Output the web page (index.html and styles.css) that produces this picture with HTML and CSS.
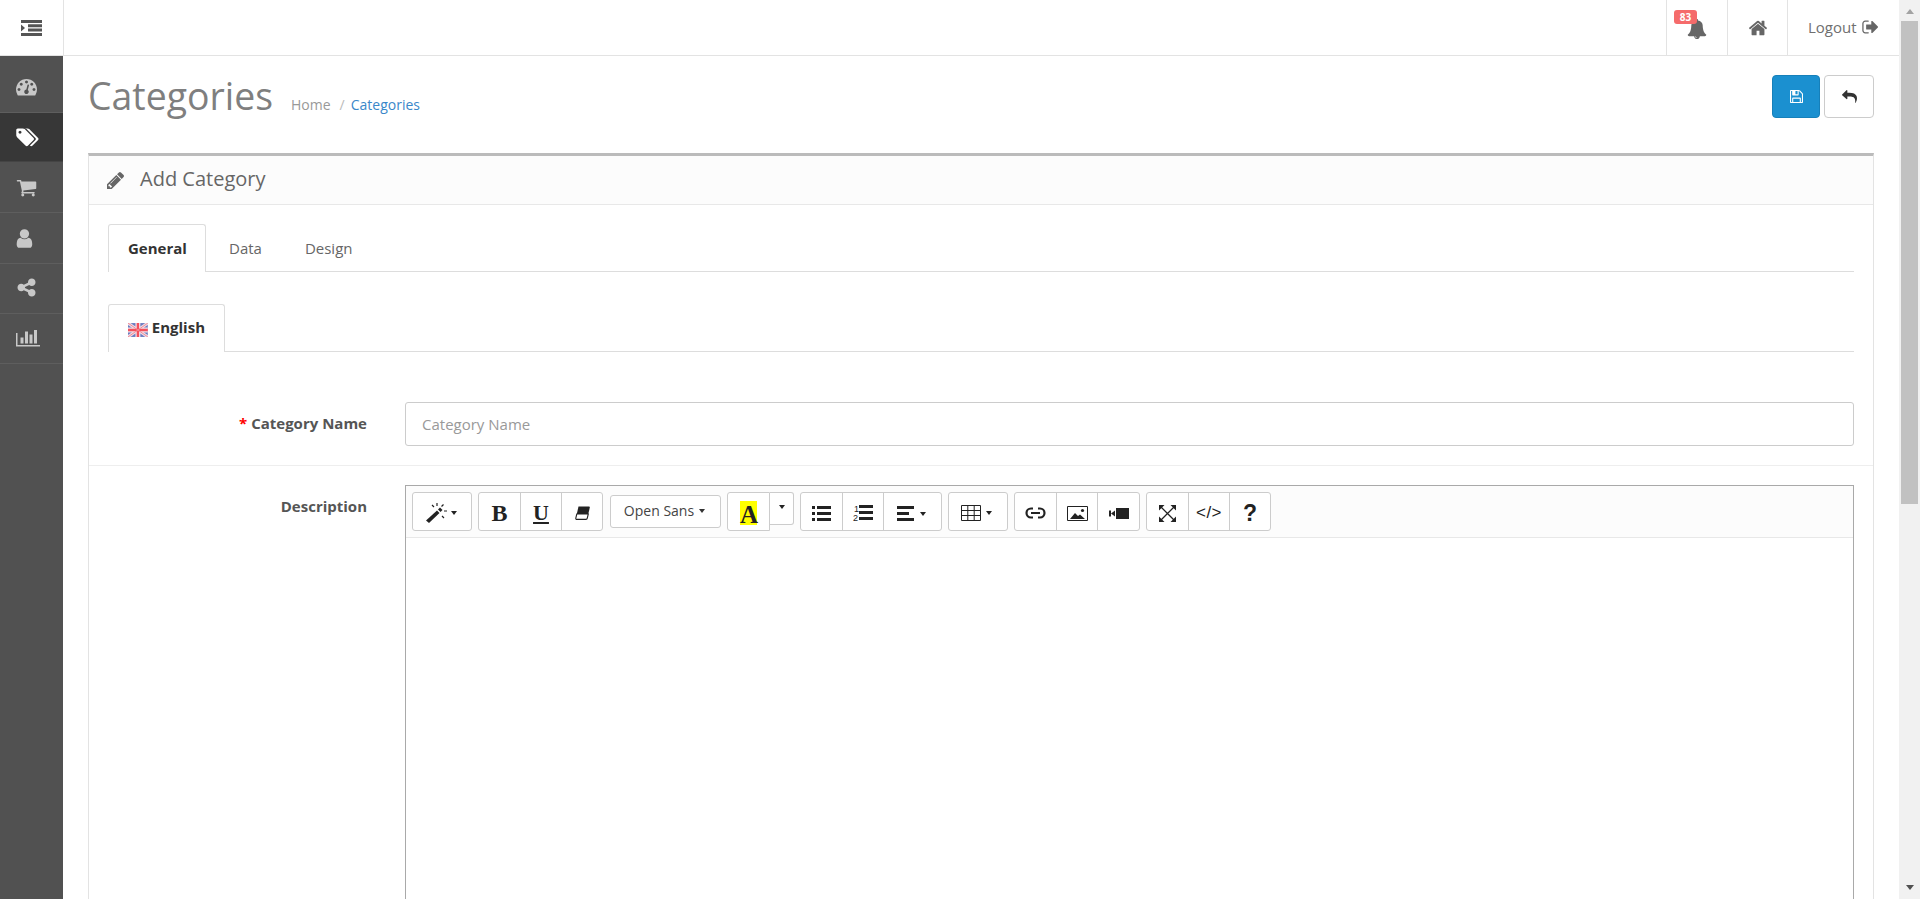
FILE: index.html
```html
<!DOCTYPE html>
<html lang="en">
<head>
<meta charset="utf-8">
<title>Categories</title>
<link rel="stylesheet" href="styles.css">
</head>
<body>
<div class="app">
  <header class="topbar">
    <button class="toggle" aria-label="Menu">
      <svg class="ic-toggle" viewBox="0 0 21 16"><path d="M0 0h21v3H0zM7 4.300h14v3H7zM7 8.600h14v3H7zM0 13h21v3H0zM0 4.500l4 3.500-4 3.500z"/></svg>
    </button>
    <nav class="topnav">
      <a class="cell cell-bell"><span class="badge">83</span><svg class="ic-bell" viewBox="0 0 1792 1792"><path d="M912 1696q0-16-16-16-59 0-101.500-42.500t-42.500-101.500q0-16-16-16t-16 16q0 73 51.500 124.500t124.500 51.500q16 0 16-16zm816-288q0 52-38 90t-90 38h-448q0 106-75 181t-181 75-181-75-75-181h-448q-52 0-90-38t-38-90q50-42 91-88t85-119.500 74.500-158.500 50-206 19.500-260q0-152 117-282.500t307-158.500q-8-19-8-39 0-40 28-68t68-28 68 28 28 68q0 20-8 39 190 28 307 158.500t117 282.500q0 139 19.500 260t50 206 74.500 158.500 85 119.500 91 88z"/></svg></a>
      <a class="cell cell-home"><svg class="ic-home" viewBox="0 0 1792 1792"><path d="M1472 992v480q0 26-19 45t-45 19h-384v-384h-256v384h-384q-26 0-45-19t-19-45v-480q0-1 .5-3t.5-3l575-474 575 474q1 2 1 6zm223-69l-62 74q-8 9-21 11h-3q-13 0-21-7l-692-577-692 577q-12 8-24 7-13-2-21-11l-62-74q-8-10-7-23.500t11-21.500l719-599q32-26 76-26t76 26l244 204v-195q0-14 9-23t23-9h192q14 0 23 9t9 23v408l219 182q10 8 11 21.500t-7 23.500z"/></svg></a>
      <a class="cell cell-logout">Logout <svg class="ic-out" viewBox="0 0 1664 1792"><path d="M704 1440q0 4 1 20t.5 26.500-3 23.500-10 19.500-20.500 6.500h-320q-119 0-203.500-84.500t-84.500-203.500v-704q0-119 84.500-203.500t203.500-84.500h320q13 0 22.500 9.500t9.500 22.500q0 4 1 20t.5 26.500-3 23.500-10 19.500-20.500 6.500h-320q-66 0-113 47t-47 113v704q0 66 47 113t113 47h312l11.500 1 11.500 3 8 5.500 7 9 2 13.500zm928-544q0 26-19 45l-544 544q-19 19-45 19t-45-19-19-45v-288h-448q-26 0-45-19t-19-45v-384q0-26 19-45t45-19h448v-288q0-26 19-45t45-19 45 19l544 544q19 19 19 45z"/></svg></a>
    </nav>
  </header>
  <div class="layout">
    <aside class="sidebar">
      <a class="side-item first"><svg class="ic-side" viewBox="0 0 1792 1792"><path d="M384 1152q0-53-37.500-90.500t-90.500-37.500-90.500 37.500-37.500 90.500 37.500 90.500 90.500 37.500 90.500-37.500 37.500-90.500zm192-448q0-53-37.500-90.500t-90.500-37.500-90.500 37.500-37.500 90.500 37.500 90.500 90.500 37.500 90.500-37.500 37.500-90.500zm428 481l101-382q6-26-7.500-48.500t-38.500-29.500-48 6.500-30 39.500l-101 382q-60 5-107 43.500t-63 98.500q-20 77 20 146t117 89 146-20 89-117q16-60-6-117t-72-91zm660-33q0-53-37.500-90.500t-90.500-37.500-90.500 37.500-37.500 90.500 37.500 90.500 90.500 37.500 90.500-37.500 37.500-90.500zm-640-640q0-53-37.500-90.500t-90.500-37.500-90.500 37.500-37.500 90.500 37.500 90.500 90.500 37.500 90.500-37.500 37.500-90.500zm448 192q0-53-37.500-90.500t-90.500-37.500-90.500 37.500-37.500 90.500 37.500 90.500 90.500 37.500 90.500-37.500 37.500-90.500zm320 448q0 261-141 483-19 29-54 29h-1402q-35 0-54-29-141-221-141-483 0-182 71-348t191-286 286-191 348-71 348 71 286 191 191 286 71 348z"/></svg></a>
      <a class="side-item active"><svg class="ic-side ic-tags" viewBox="0 0 1920 1792"><path d="M448 448q0-53-37.500-90.500t-90.500-37.500-90.500 37.500-37.500 90.500 37.500 90.500 90.500 37.500 90.500-37.500 37.500-90.500zm1067 576q0 53-37 90l-491 492q-39 37-91 37-53 0-90-37l-715-716q-38-37-64.500-101t-26.500-117v-416q0-52 38-90t90-38h416q53 0 117 26.500t102 64.500l715 714q37 39 37 91zm384 0q0 53-37 90l-491 492q-39 37-91 37-36 0-59-14t-53-45l470-470q37-37 37-90 0-52-37-91l-715-714q-38-38-102-64.500t-117-26.500h224q53 0 117 26.500t102 64.500l715 714q37 39 37 91z"/></svg></a>
      <a class="side-item tall"><svg class="ic-side" viewBox="0 0 1792 1792"><path d="M704 1536q0 52-38 90t-90 38-90-38-38-90 38-90 90-38 90 38 38 90zm896 0q0 52-38 90t-90 38-90-38-38-90 38-90 90-38 90 38 38 90zm128-1088v512q0 24-16.500 42.500t-40.500 21.500l-1044 122q13 60 13 70 0 16-24 64h920q26 0 45 19t19 45-19 45-45 19h-1024q-26 0-45-19t-19-45q0-11 8-31.500t16-36 21.500-40 15.500-29.500l-177-823h-204q-26 0-45-19t-19-45 19-45 45-19h256q16 0 28.500 6.500t19.500 15.500 13 24.500 8 26 5.500 29.500 4.500 26h1201q26 0 45 19t19 45z"/></svg></a>
      <a class="side-item tall"><svg class="ic-side ic-user" viewBox="200 128 1400 1536"><path d="M1536 1399q0 109-62.500 187t-150.500 78h-854q-88 0-150.500-78t-62.500-187q0-85 8.500-160.500t31.500-152 58.500-131 94-89 134.500-34.500q131 128 313 128t313-128q76 0 134.500 34.500t94 89 58.500 131 31.500 152 8.500 160.500zm-256-887q0 159-112.500 271.500t-271.500 112.500-271.500-112.500-112.500-271.500 112.500-271.500 271.500-112.500 271.500 112.500 112.500 271.500z"/></svg></a>
      <a class="side-item"><svg class="ic-side" viewBox="0 0 1792 1792"><path d="M1344 1024q133 0 226.500 93.500t93.500 226.500-93.500 226.500-226.500 93.500-226.500-93.500-93.500-226.500q0-12 2-34l-360-180q-92 86-218 86-133 0-226.500-93.500t-93.500-226.500 93.500-226.500 226.500-93.500q126 0 218 86l360-180q-2-22-2-34 0-133 93.500-226.500t226.500-93.500 226.500 93.500 93.500 226.500-93.500 226.500-226.500 93.500q-126 0-218-86l-360 180q2 22 2 34t-2 34l360 180q92-86 218-86z"/></svg></a>
      <a class="side-item"><svg class="ic-side ic-chart" viewBox="0 0 2048 1792"><path d="M640 896v512h-256v-512h256zm384-512v1024h-256v-1024h256zm1024 1152v128h-2048v-1152h128v1024h1920zm-640-896v768h-256v-768h256zm384-384v1152h-256v-1152h256z"/></svg></a>
    </aside>
    <main class="content">
      <div class="page-header">
        <div class="title-wrap">
          <h1>Categories</h1>
          <ul class="breadcrumb"><li>Home</li><li class="sep">/</li><li class="current">Categories</li></ul>
        </div>
        <div class="actions">
          <button class="btn btn-primary" aria-label="Save"><svg class="ic-btn" viewBox="0 0 1536 1536"><path d="M384 1408h768v-384H384v384zm896 0h128V512q0-14-10-38.500t-20-34.500l-281-281q-10-10-34-20t-39-10v416q0 40-28 68t-68 28H352q-40 0-68-28t-28-68V128H128v1280h128V992q0-40 28-68t68-28h832q40 0 68 28t28 68v416zM896 480V160q0-13-9.500-22.500T864 128H672q-13 0-22.500 9.500T640 160v320q0 13 9.500 22.500T672 512h192q13 0 22.500-9.500T896 480zm640 32v928q0 40-28 68t-68 28H96q-40 0-68-28t-28-68V96q0-40 28-68T96 0h928q40 0 88 20t76 48l280 280q28 28 48 76t20 88z"/></svg></button>
          <button class="btn btn-default" aria-label="Cancel"><svg class="ic-reply" viewBox="0 0 1792 1536"><path d="M1792 992q0 166-127 451-3 7-10.500 24t-13.500 30-13 22q-12 17-28 17-15 0-23.500-10t-8.500-25q0-9 2.500-26.500t2.500-23.500q5-68 5-123 0-101-17.500-181t-48.500-138.500-80-101-105.500-69.500-133-42.500-154-21.500-175.500-6H640v256q0 26-19 45t-45 19-45-19L19 621Q0 602 0 576t19-45L531 19q19-19 45-19t45 19 19 45v256h224q713 0 875 403 53 134 53 333z"/></svg></button>
        </div>
      </div>
      <section class="panel">
        <div class="panel-heading">
          <svg class="ic-pencil" viewBox="0 0 1515 1515"><path d="M363 1387l91-91-235-235-91 91v107h128v128h107zM886 459q0-22-22-22-10 0-17 7L305 986q-7 7-7 17 0 22 22 22 10 0 17-7l542-542q7-7 7-17zM832 267l416 416-832 832H0v-416zM1515 363q0 53-37 90l-166 166-416-416 166-165q36-38 90-38 53 0 91 38l235 234q37 39 37 91z"/></svg>
          <h3>Add Category</h3>
        </div>
        <div class="panel-body">
          <ul class="tabs tabs-main">
            <li class="tab active">General</li>
            <li class="tab tab-data">Data</li>
            <li class="tab">Design</li>
          </ul>
          <ul class="tabs tabs-lang">
            <li class="tab active">
              <svg class="flag" viewBox="0 0 20 14"><rect width="20" height="14" fill="#6a7cc0"/><path d="M0 0l20 14M20 0L0 14" stroke="#f0dbe4" stroke-width="3"/><path d="M10 0v14M0 7h20" stroke="#f3dfe6" stroke-width="5"/><path d="M10 0v14M0 7h20" stroke="#f4505c" stroke-width="2.400"/><path d="M0 0l20 14M20 0L0 14" stroke="#f08a96" stroke-width="1"/></svg>
              English
            </li>
          </ul>
          <div class="form-row row-name">
            <label class="form-label"><span class="req">*</span> Category Name</label>
            <div class="form-field"><input class="input" type="text" placeholder="Category Name"></div>
          </div>
          <div class="form-row row-desc">
            <label class="form-label">Description</label>
            <div class="form-field">
              <div class="editor">
                <div class="toolbar">
                  <div class="group"><button class="tb w60 has-caret"><svg class="i" width="32" height="22" viewBox="0 0 32 22"><path d="M1 18.500L12 8.500l2.500 2.500L4 21z"/><path d="M13 7.500l2-2 2.500 2.500-2 2z"/><path d="M12 1v3M7 3l2 2M18.500 2.500l-2 2M19 9h3M17 14l2 2" stroke="#222" stroke-width="1.200" fill="none"/><path d="M26 9h6l-3 4z"/></svg></button></div>
                  <div class="group">
                    <button class="tb tb-b">B</button>
                    <button class="tb tb-u">U</button>
                    <button class="tb"><svg class="i" width="15" height="14" viewBox="0 0 15 14"><path d="M3.500.500h10.500q1 0 .800 1L13.300 8H1.800z"/><path d="M1.800 8h11.500l-1 4.200q-.2 1.200-1.300 1.200H2q-1.500 0-1.200-1.300z" fill="#fff" stroke="#222" stroke-width="1.100"/></svg></button>
                  </div>
                  <button class="tb-font">Open Sans <span class="caret"></span></button>
                  <div class="group group-color">
                    <button class="tb tb-a"><span class="hl">A</span></button>
                    <button class="tb tb-drop"><span class="caret dark"></span></button>
                  </div>
                  <div class="group">
                    <button class="tb"><svg class="i" width="19" height="15" viewBox="0 0 19 15"><path d="M0 0h3v3H0zM5 0h14v3H5zM0 6h3v3H0zM5 6h14v3H5zM0 12h3v3H0zM5 12h14v3H5z"/></svg></button>
                    <button class="tb"><svg class="i" width="20" height="16" viewBox="0 0 20 16"><path d="M6 0h14v3H6zM6 6h14v3H6zM6 12h14v3H6z"/><text class="num" x="1" y="6.500">1</text><text class="num" x="0" y="15.500">2</text></svg></button>
                    <button class="tb w58 has-caret"><svg class="i" width="29" height="15" viewBox="0 0 29 15"><path d="M0 0h17v3H0zM0 6h12v3H0zM0 12h17v3H0zM23 6h6l-3 4z"/></svg></button>
                  </div>
                  <div class="group"><button class="tb w59 has-caret"><svg class="i" width="31" height="17" viewBox="0 0 31 17"><path d="M.5.500h19v15H.500zM.5 5.500h19M.5 10.500h19M6.800.500v15M13.200.500v15" fill="none" stroke="#222" stroke-width="1"/><path d="M25 6h6l-3 4z"/></svg></button></div>
                  <div class="group">
                    <button class="tb"><svg class="i" width="21" height="12" viewBox="0 0 21 12"><path d="M8 1.500H6a4.500 4.500 0 0 0 0 9h2M13 1.500h2a4.500 4.500 0 0 1 0 9h-2M6 6h9" fill="none" stroke="#222" stroke-width="2.200"/></svg></button>
                    <button class="tb"><svg class="i" width="21" height="15" viewBox="0 0 21 15"><path d="M.5.500h20v14H.500z" fill="none" stroke="#222"/><path d="M3 13l5-6 3 3 2-1.500 5 4.500z"/><circle cx="15.500" cy="4.500" r="1.600"/></svg></button>
                    <button class="tb w42"><svg class="i" width="20" height="11" viewBox="0 0 20 11"><path d="M7 0h13v11H7zM0 2.500h2v6H0zM2 5.500l4-3v6z"/></svg></button>
                  </div>
                  <div class="group">
                    <button class="tb"><svg class="i" width="17" height="17" viewBox="0 0 17 17"><path d="M2 2l13 13M15 2L2 15" fill="none" stroke="#222" stroke-width="1.300"/><path d="M0 0h5.500L0 5.500zM17 0v5.500L11.500 0zM0 17v-5.500L5.500 17zM17 17h-5.500l5.500-5.500z"/></svg></button>
                    <button class="tb tb-code">&lt;/&gt;</button>
                    <button class="tb tb-help">?</button>
                  </div>
                </div>
                <div class="editable"></div>
              </div>
            </div>
          </div>
        </div>
      </section>
    </main>
  </div>
</div>
<div class="scrollbar">
  <span class="arrow up"></span>
  <div class="thumb-track"><div class="thumb"></div></div>
  <span class="arrow down"></span>
</div>
</body>
</html>
```
FILE: styles.css
```css
* { box-sizing: border-box; }
html, body { margin: 0; height: 899px; overflow: hidden; }
body {
  display: flex;
  font-family: "Open Sans", sans-serif;
  font-size: 15px;
  color: #666;
  background: #fff;
}
button { font-family: inherit; cursor: pointer; }
ul { list-style: none; margin: 0; padding: 0; }

.app { flex: 1; min-width: 0; display: flex; flex-direction: column; height: 899px; }

/* top bar */
.topbar { height: 56px; flex: none; display: flex; justify-content: space-between; border-bottom: 1px solid #e3e3e3; }
.toggle { width: 64px; padding: 0; background: #fff; border: 0; border-right: 1px solid #e3e3e3; display: flex; align-items: center; justify-content: center; }
.ic-toggle { width: 21px; height: 16px; fill: #555; }
.topnav { display: flex; }
.cell { display: flex; align-items: center; justify-content: center; border-left: 1px solid #e3e3e3; position: relative; color: #6f6f6f; }
.cell-bell { width: 61px; }
.cell-home { width: 60px; }
.cell-logout { width: 112px; font-size: 15px; justify-content: flex-start; padding-left: 20px; gap: 4px; padding-bottom: 1px; }
.ic-bell { width: 20px; height: 20px; fill: #666; margin: 2px 0 0 -1px; }
.ic-home { width: 20px; height: 20px; fill: #666; }
.ic-out { width: 18px; height: 18px; fill: #666; }
.badge { position: absolute; left: 7px; top: 10px; width: 23px; height: 14px; border-radius: 3px; background: #f56b6b; color: #fff; font-size: 10px; line-height: 14px; font-weight: 700; text-align: center; z-index: 1; }

.layout { flex: 1; display: flex; min-height: 0; }

/* sidebar */
.sidebar { width: 63px; flex: none; background: #515151; }
.side-item { display: flex; align-items: center; padding: 0 0 2px 16px; height: 50px; border-bottom: 1px solid #5e5e5e; }
.side-item.tall { height: 51px; padding: 1px 0 0 16px; }
.side-item.first { height: 57px; padding: 4px 0 0 16px; }
.side-item.active { height: 49px; padding: 0 0 0 16px; background: #373737; border-bottom-color: #444; }
.ic-side { width: 21px; height: 21px; fill: #c8c8c8; }
.side-item.active .ic-side { fill: #fff; }
.ic-tags { width: 23px; }
.ic-user { width: 17px; height: 19px; }
.ic-chart { width: 24px; height: 21px; }

/* content */
.content { flex: 1; min-width: 0; padding: 0 25px; }
.page-header { height: 97px; display: flex; justify-content: space-between; }
.title-wrap { display: flex; align-items: baseline; padding-top: 15px; }
h1 { margin: 0; font-size: 37.400px; line-height: 50px; font-weight: 400; color: #7f7f7f; }
.breadcrumb { display: flex; margin-left: 18px; font-size: 14px; color: #999; }
.sep { margin: 0 6px 0 9px; color: #bbb; }
.current { color: #3a87c9; }
.actions { display: flex; gap: 4px; padding-top: 19px; padding-right: 0; }
.btn { width: 48px; height: 43px; padding: 0; border-radius: 4px; display: flex; align-items: center; justify-content: center; }
.btn-primary { background: #1b90d0; border: 1px solid #1680ba; }
.btn-default { width: 50px; background: #fff; border: 1px solid #ccc; }
.ic-btn { width: 13px; height: 13px; fill: #fff; }
.ic-reply { width: 15px; height: 13px; fill: #333; }

/* panel */
.panel { border: 1px solid #e3e3e3; border-top: 3px solid #bbb; border-bottom: 0; }
.panel-heading { height: 49px; display: flex; align-items: center; padding-left: 18px; background: #fcfcfc; border-bottom: 1px solid #e8e8e8; }
.ic-pencil { width: 17px; height: 17px; fill: #666; margin-top: 1px; }
h3 { margin: -3px 0 0 16px; font-size: 20px; font-weight: 400; color: #666; }
.panel-body { padding: 19px 0 0; }

/* tabs */
.tabs { display: flex; margin: 0 19px; border-bottom: 1px solid #ddd; }
.tabs-main { height: 48px; }
.tabs-lang { height: 48px; margin-top: 32px; }
.tab { padding: 0 21px; line-height: 47px; font-size: 15px; color: #666; border: 1px solid transparent; border-bottom: 0; height: 48px; }
.tab-data { padding: 0 20px 0 22px; }
.tab.active { background: #fff; color: #333; font-weight: 700; border-color: #ddd; border-radius: 3px 3px 0 0; padding: 0 19px; }
.tabs-main .tab.active { width: 98px; }
.tabs-lang .tab.active { display: flex; align-items: center; gap: 4px; width: 117px; padding-bottom: 2px; }
.flag { width: 20px; height: 14px; margin-top: 4px; }

/* form */
.form-row { display: flex; }
.form-label { width: 278px; flex: none; text-align: right; font-size: 15px; font-weight: 700; color: #555; }
.req { color: #f00; }
.form-field { flex: 1; min-width: 0; margin: 0 19px 0 38px; }
.row-name { padding: 50px 0 19px; border-bottom: 1px solid #eee; align-items: center; }
.row-name .form-label { padding-bottom: 2px; }
.row-desc { padding-top: 19px; }
.row-desc .form-label { padding-top: 11px; }
.input { display: block; width: 100%; height: 44px; border: 1px solid #ccc; border-radius: 3px; padding: 0 16px; font: 15px "Open Sans", sans-serif; color: #555; }
.input::placeholder { color: #999; opacity: 1; }

/* editor */
.editor { border: 1px solid #a9a9a9; border-bottom: 0; height: 600px; }
.toolbar { height: 52px; display: flex; align-items: flex-start; gap: 6px; padding: 6px 0 0 6px; background: #fcfcfc; border-bottom: 1px solid #e8e8e8; }
.group { display: flex; background: #fff; border: 1px solid #ccc; border-radius: 3px; }
.tb { width: 41px; height: 37px; padding: 3px 0 0; border: 0; border-left: 1px solid #ccc; background: none; display: flex; align-items: center; justify-content: center; color: #222; }
.tb:first-child { border-left: 0; width: 41px; }
.tb.w60, .tb.w59 { width: 58px; }
.group > .tb.w58 { width: 58px; }
.group > .tb.w42 { width: 42px; }
.tb.has-caret { padding-right: 3px; }
.i { fill: #222; display: block; }
.num { font: 9px "Liberation Sans", sans-serif; fill: #222; }
.tb-b { font: 700 24px "Liberation Serif", serif; }
.tb-u { font: 700 22px "Liberation Serif", serif; text-decoration: underline; }
.tb-font { width: 111px; height: 33px; margin: 3px 0 0 1px; padding: 0 2px 2px 0; background: #fff; border: 1px solid #ccc; border-radius: 3px; font-size: 14px; color: #444; display: flex; align-items: center; justify-content: center; gap: 5px; }
.caret { width: 0; height: 0; border: 3.500px solid transparent; border-top: 4px solid #333; border-bottom: 0; display: inline-block; }
.caret.dark { border-top-color: #222; margin-top: -4px; }
.group-color { align-items: flex-start; background: none; border: 0; }
.tb-a { height: 39px; width: 43px; padding: 0; background: #fff; border: 1px solid #ccc; border-radius: 3px 0 0 3px; }
.tb-a:first-child { width: 43px; border-left: 1px solid #ccc; }
.hl { background: #ff0; width: 17px; height: 24px; margin-top: 2px; font: 700 25px/28px "Liberation Serif", serif; color: #222; text-align: center; display: block; overflow: visible; }
.tb-drop { width: 24px; height: 33px; padding: 0; background: #fff; border: 1px solid #ccc; border-left: 0; border-radius: 0 3px 3px 0; }
.tb-code { font: 17px "Liberation Sans", sans-serif; letter-spacing: .5px; }
.tb-help { font: 700 23px "Liberation Sans", sans-serif; }
.editable { height: 500px; background: #fff; }

/* scrollbar */
.scrollbar { width: 21px; flex: none; height: 899px; background: #f1f1f1; display: flex; flex-direction: column; align-items: center; }
.arrow { flex: none; width: 0; height: 0; border: 4.500px solid transparent; }
.arrow.up { border-top: 0; border-bottom: 5px solid #a3a3a3; margin: 9px 0 7px; }
.arrow.down { border-bottom: 0; border-top: 5px solid #505050; margin: 7px 0 9px; }
.thumb-track { flex: 1; width: 17px; }
.thumb { height: 483px; background: #c1c1c1; }
```
